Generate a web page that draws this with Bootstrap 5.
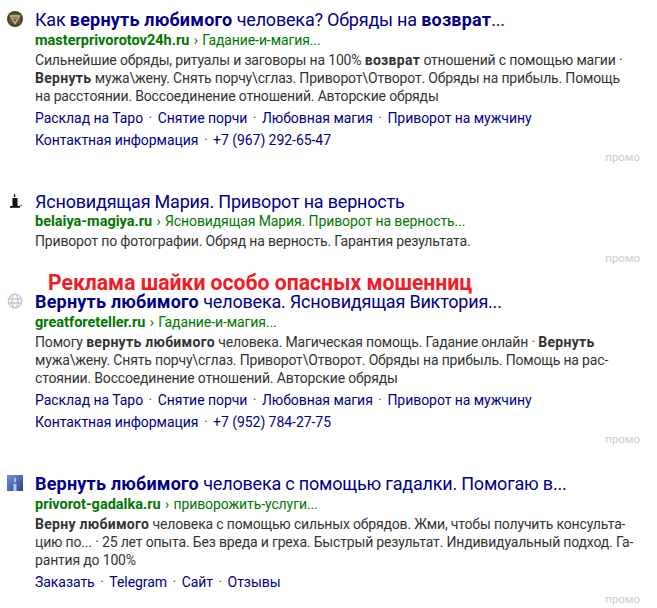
<!DOCTYPE html>
<html lang="ru">
<head>
    <meta charset="UTF-8">
    <meta name="viewport" content="width=device-width, initial-scale=1.0">
    <title>Реклама</title>
    <link href="https://cdn.jsdelivr.net/npm/bootstrap@5.3.0/dist/css/bootstrap.min.css" rel="stylesheet">
    <style>
        body {
            background-color: #fff;
            font-family: Roboto, "Liberation Sans", sans-serif;
            font-size: 14px;
            letter-spacing: -0.17px;
            line-height: 18px;
            color: #333;
        }
        .results-page {
            position: relative;
            padding-top: 9px;
        }
        .ad-item {
            padding-left: 35px;
            position: relative;
            margin-bottom: 27px;
        }
        .ad-favicon {
            position: absolute;
            left: 7px;
            top: 2px;
            width: 16px;
            height: 16px;
        }
        .ad-title {
            font-size: 18px;
            letter-spacing: -0.2px;
            line-height: 22px;
            color: #00008b;
            white-space: nowrap;
        }
        .ad-title b { letter-spacing: 0.2px; }
        .ad-url {
            font-size: 14px;
            letter-spacing: -0.1px;
            line-height: 18px;
            color: #070;
            white-space: nowrap;
        }
        .ad-url b { font-size: 14.5px; letter-spacing: 0; line-height: 1; font-weight: 700; }
        .ad-path-sep { padding: 0 1px; }
        .ad-text {
            margin-top: 2px;
            white-space: nowrap;
        }
        .ad-text b { letter-spacing: 0.3px; }
        .ad-links {
            letter-spacing: -0.05px;
            color: #00008b;
            margin-top: 4px;
            white-space: nowrap;
        }
        .ad-sep { color: #555; padding: 0 5.5px; }
        .ad-promo {
            font-size: 11.5px;
            letter-spacing: 0;
            line-height: 14px;
            color: #ccc;
            text-align: right;
            padding-right: 17px;
            margin-top: 1px;
        }
        .ad-item-short { margin-bottom: 26px; }
        .ad-item-short .ad-url { margin-top: -1px; }
        .scam-note {
            position: absolute;
            left: 48px;
            top: 275px;
            font-size: 21.15px;
            letter-spacing: 0;
            line-height: 16px;
            font-weight: 700;
            color: #f01c28;
            white-space: nowrap;
        }
    </style>
</head>
<body>
    <div class="results-page">
        <div class="ad-item">
            <svg class="ad-favicon" viewBox="0 0 16 16"><circle cx="8" cy="8" r="8" fill="#4a3f28"/><circle cx="8" cy="8" r="5.8" fill="#6b5d3c"/><path d="M3.5 5h9L8 12.5z" fill="none" stroke="#c9b98a" stroke-width="1.3"/><path d="M6 7.2h4" stroke="#c9b98a"/></svg>
            <div class="ad-title">Как <b>вернуть любимого</b> человека? Обряды на <b>возврат</b>...</div>
            <div class="ad-url"><b>masterprivorotov24h.ru</b><span class="ad-path-sep"> › </span>Гадание-и-магия...</div>
            <div class="ad-text">Сильнейшие обряды, ритуалы и заговоры на 100% <b>возврат</b> отношений с помощью магии ·<br><b>Вернуть</b> мужа\жену. Снять порчу\сглаз. Приворот\Отворот. Обряды на прибыль. Помощь<br>на расстоянии. Воссоединение отношений. Авторские обряды</div>
            <div class="ad-links">Расклад на Таро<span class="ad-sep">·</span>Снятие порчи<span class="ad-sep">·</span>Любовная магия<span class="ad-sep">·</span>Приворот на мужчину</div>
            <div class="ad-links">Контактная информация<span class="ad-sep">·</span>+7 (967) 292-65-47</div>
            <div class="ad-promo">промо</div>
        </div>
        <div class="ad-item ad-item-short">
            <svg class="ad-favicon" viewBox="0 0 16 16"><path d="M7.5 0.5c1 1.5 1 2.5 .5 3.5h-1c-.5-1-.2-2 .5-3.5z" fill="#111"/><rect x="5.5" y="5" width="5" height="8" fill="#111"/><rect x="3" y="13" width="10" height="1.8" fill="#111"/><circle cx="14" cy="12.5" r="1.1" fill="#888"/></svg>
            <div class="ad-title">Ясновидящая Мария. Приворот на верность</div>
            <div class="ad-url"><b>belaiya-magiya.ru</b><span class="ad-path-sep"> › </span>Ясновидящая Мария. Приворот на верность...</div>
            <div class="ad-text">Приворот по фотографии. Обряд на верность. Гарантия результата.</div>
            <div class="ad-promo">промо</div>
        </div>
        <div class="ad-item">
            <svg class="ad-favicon" viewBox="0 0 16 16" fill="none" stroke="#c3c8d6" stroke-width="1.3"><circle cx="8" cy="8" r="6.8"/><ellipse cx="8" cy="8" rx="3" ry="6.8"/><path d="M1.6 6h12.8M1.6 10h12.8"/></svg>
            <div class="ad-title"><b>Вернуть любимого</b> человека. Ясновидящая Виктория...</div>
            <div class="ad-url"><b>greatforeteller.ru</b><span class="ad-path-sep"> › </span>Гадание-и-магия...</div>
            <div class="ad-text">Помогу <b>вернуть любимого</b> человека. Магическая помощь. Гадание онлайн · <b>Вернуть</b><br>мужа\жену. Снять порчу\сглаз. Приворот\Отворот. Обряды на прибыль. Помощь на рас-<br>стоянии. Воссоединение отношений. Авторские обряды</div>
            <div class="ad-links">Расклад на Таро<span class="ad-sep">·</span>Снятие порчи<span class="ad-sep">·</span>Любовная магия<span class="ad-sep">·</span>Приворот на мужчину</div>
            <div class="ad-links">Контактная информация<span class="ad-sep">·</span>+7 (952) 784-27-75</div>
            <div class="ad-promo">промо</div>
        </div>
        <div class="ad-item">
            <svg class="ad-favicon" viewBox="0 0 16 16"><defs><linearGradient id="candleBg" x1="0" y1="0" x2="1" y2="1"><stop offset="0" stop-color="#6f8fe4"/><stop offset="1" stop-color="#2f4585"/></linearGradient></defs><rect width="16" height="16" fill="url(#candleBg)"/><rect x="6.5" y="9" width="3" height="7" fill="#a9d3e6"/><path d="M8 2c1 2 1 4 0 6-1-2-1-4 0-6z" fill="#f0e8e0"/></svg>
            <div class="ad-title"><b>Вернуть любимого</b> человека с помощью гадалки. Помогаю в...</div>
            <div class="ad-url"><b>privorot-gadalka.ru</b><span class="ad-path-sep"> › </span>приворожить-услуги...</div>
            <div class="ad-text"><b>Верну любимого</b> человека с помощью сильных обрядов. Жми, чтобы получить консульта-<br>цию по... · 25 лет опыта. Без вреда и греха. Быстрый результат. Индивидуальный подход. Га-<br>рантия до 100%</div>
            <div class="ad-links">Заказать<span class="ad-sep">·</span>Telegram<span class="ad-sep">·</span>Сайт<span class="ad-sep">·</span>Отзывы</div>
            <div class="ad-promo">промо</div>
        </div>
        <div class="scam-note">Реклама шайки особо опасных мошенниц</div>
    </div>
    <script src="https://cdn.jsdelivr.net/npm/bootstrap@5.3.0/dist/js/bootstrap.bundle.min.js"></script>
</body>
</html>
